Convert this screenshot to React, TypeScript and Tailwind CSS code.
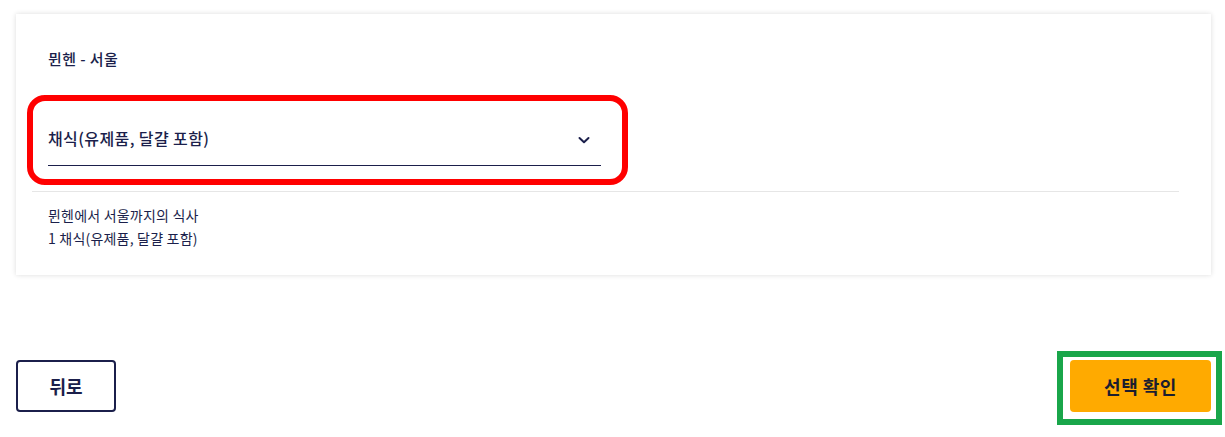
import React from "react";

export default function App() {
  return (
    <div
      className="relative w-[1225px] h-[437px] bg-white text-[#1b1f4b]"
      style={{ fontFamily: '"Noto Sans CJK KR", "Noto Sans", sans-serif' }}
    >
      <div className="pt-[14px] pl-4 pr-[14px]">
        <div className="bg-white shadow-[0_0_5px_rgba(0,0,0,0.14)] pt-[35px] pb-[25px]">
          <div className="px-8 text-[15px] leading-5 font-medium tracking-[0.4px]">뮌헨 - 서울</div>
          <div className="ml-8 mt-[58px] w-[553px] border-b-[1.5px] border-[#1b1f4b] pb-4 flex items-center justify-between">
            <span className="text-[16px] leading-[22px] font-medium tracking-[0.4px]">채식(유제품, 달걀 포함)</span>
            <svg width="14" height="10" viewBox="0 0 14 10" className="mr-[10px] mt-[4px]">
              <path d="M2.5 3 L7 7.2 L11.5 3" fill="none" stroke="#1b1f4b" strokeWidth="2" strokeLinecap="round" strokeLinejoin="round" />
            </svg>
          </div>
          <div className="ml-4 mr-8 mt-[25px] border-t border-[#e6e6e6]" />
          <div className="px-8 pt-3 text-[14px] leading-[23px] tracking-[0.2px]">
            <div>뮌헨에서 서울까지의 식사</div>
            <div>1 채식(유제품, 달걀 포함)</div>
          </div>
        </div>
        <div className="mt-[85px] flex justify-between items-center">
          <button className="w-[100px] h-[52px] border-2 border-[#1b1f4b] rounded-[4px] text-[18px] font-bold text-[#1b1f4b]">
            뒤로
          </button>
          <button className="w-[141px] h-[52px] bg-[#ffaa00] rounded-[4px] text-[18px] font-bold text-[#1b1d2f] tracking-[0.5px]">
            선택 확인
          </button>
        </div>
      </div>
      <div className="absolute left-[27px] top-[95px] w-[601px] h-[90px] border-[6px] border-[#ff0000] rounded-[18px] pointer-events-none" />
      <div className="absolute left-[1057px] top-[351px] w-[165px] h-[74px] border-[6px] border-[#19a64a] pointer-events-none" />
    </div>
  );
}
